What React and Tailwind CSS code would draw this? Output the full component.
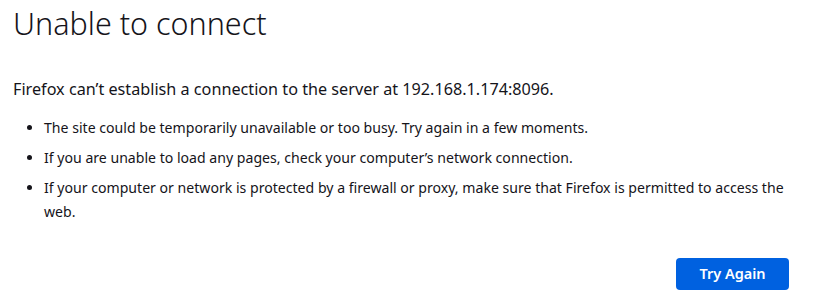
export default function App() {
  return (
    <div className="min-h-[300px] bg-white text-[#15141a]" style={{ fontFamily: '"Noto Sans", "Open Sans", sans-serif' }}>
      <div className="w-[789px] pl-[13px]">
        <h1 className="pt-[3px] text-[30.5px] font-light leading-[40px]">Unable to connect</h1>
        <p className="mt-[34px] text-[16.2px] leading-[24px]">
          Firefox can’t establish a connection to the server at 192.168.1.174:8096.
        </p>
        <ul className="mt-[15px] list-disc pl-[31px] text-[14.1px] leading-[24px]">
          <li className="mb-[6px]">The site could be temporarily unavailable or too busy. Try again in a few moments.</li>
          <li className="mb-[6px]">If you are unable to load any pages, check your computer’s network connection.</li>
          <li>If your computer or network is protected by a firewall or proxy, make sure that Firefox is permitted to access the web.</li>
        </ul>
        <div className="mt-[34px] flex justify-end">
          <button className="h-[32px] w-[113px] rounded-[4px] bg-[#0061e0] text-[14.5px] font-semibold text-white">
            Try Again
          </button>
        </div>
      </div>
    </div>
  )
}
